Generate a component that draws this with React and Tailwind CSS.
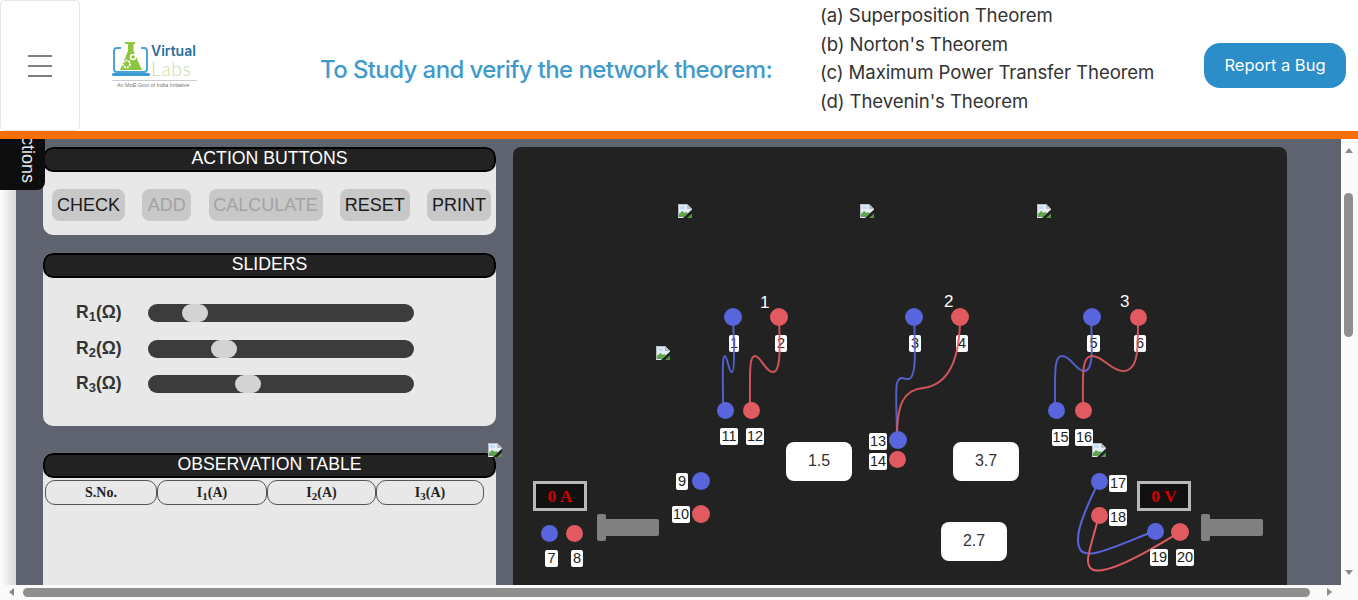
import React from "react";

const BLUE = "#5865dc";
const RED = "#e05a5f";

function BrokenImg({ x, y }) {
  return (
    <svg className="absolute" style={{ left: x, top: y }} width="14" height="14" viewBox="0 0 14 14">
      <path d="M0 0H9L14 5V14H0Z" fill="#e6edf6" />
      <path d="M9 0V5H14Z" fill="#b9bcc0" />
      <path d="M0.5 0.5H9M0.5 0.5V13.5" stroke="#b5b8bc" strokeWidth="1" fill="none" />
      <path d="M1 13V10L4 7L7 9L8 8L10 9L6 13Z" fill="#5aa847" />
      <path d="M2 2H7V5H2Z" fill="#c7dcf6" />
      <path d="M5 14L14 5.5V14Z" fill="#222222" />
      <path d="M9 14L14 9.5V14Z" fill="#4f9a3f" />
    </svg>
  );
}

function Dot({ x, y, c, s = 18 }) {
  return (
    <div
      className="absolute rounded-full"
      style={{ left: x - s / 2, top: y - s / 2, width: s, height: s, backgroundColor: c }}
    />
  );
}

function Tag({ x, y, t, w }) {
  return (
    <div
      className="absolute h-[17px] rounded-[2px] bg-white text-[#222] text-[14.5px] leading-[17px] text-center"
      style={{ left: x, top: y, width: w }}
    >
      {t}
    </div>
  );
}

function Readout({ x, y, t }) {
  return (
    <div
      className="absolute w-[54px] h-[30px] border-[3px] border-[#b8b8b8] bg-[#111] text-[#d00000] font-bold text-[17.5px] leading-[24px] text-center font-['Liberation_Serif',serif]"
      style={{ left: x, top: y }}
    >
      {t}
    </div>
  );
}

function Probe({ x, y }) {
  return (
    <div className="absolute flex items-center" style={{ left: x, top: y }}>
      <div className="w-[9px] h-[27px] bg-[#808080] rounded-[2px]" />
      <div className="w-[53px] h-[17px] bg-[#808080] rounded-r-[2px]" />
    </div>
  );
}

function ValueBox({ x, y, t }) {
  return (
    <div
      className="absolute w-[66px] h-[39px] rounded-[8px] bg-white text-[#333] text-[16px] leading-[37px] text-center"
      style={{ left: x, top: y }}
    >
      {t}
    </div>
  );
}

function Title({ children }) {
  return (
    <div className="h-[25px] rounded-[10px] border-2 border-black bg-[#222] text-white text-[17.7px] leading-[18px] text-center">
      {children}
    </div>
  );
}

function Btn({ children, off, w }) {
  return (
    <div
      className={`h-[32px] rounded-[8px] bg-[#c8c8c8] text-[18px] leading-[32px] text-center ${off ? "text-[#a3a3a3]" : "text-[#1a1a1a]"}`}
      style={{ width: w }}
    >
      {children}
    </div>
  );
}

function SliderRow({ n, pos }) {
  return (
    <div className="flex items-center h-[18px]">
      <div className="w-[105px] pl-[33px] -mt-[2px] text-[#333] font-bold text-[17.5px] leading-[18px] whitespace-nowrap">
        R<sub className="text-[13px] leading-none">{n}</sub>(Ω)
      </div>
      <div className="relative w-[266px] h-[18px] rounded-[9px] bg-[#3c3c3c]">
        <div
          className="absolute top-0 w-[26px] h-[18px] rounded-[9px] bg-[#d3d3d3]"
          style={{ left: pos }}
        />
      </div>
    </div>
  );
}

function Th({ w, children }) {
  return (
    <div
      className="h-[25px] rounded-[10px] border border-[#555] font-bold text-[#222] text-[14px] leading-[23px] text-center font-['Liberation_Serif',serif]"
      style={{ width: w }}
    >
      {children}
    </div>
  );
}

function Cur({ n }) {
  return (
    <>
      I<sub className="text-[11px] leading-none">{n}</sub>(A)
    </>
  );
}

function Logo() {
  return (
    <div className="relative w-[90px] h-[56px] ml-[31px] mt-[3px] shrink-0 font-['Inter',sans-serif]">
      <svg className="absolute left-0 top-0" width="42" height="40" viewBox="0 0 42 40">
        <path d="M10 9H6Q3 9 3 12V30Q3 33 6 33H33Q36 33 36 30V12Q36 9 33 9H30" fill="none" stroke="#4aa3d6" strokeWidth="2" />
        <rect x="1" y="34" width="38" height="3" rx="1.5" fill="#3c9ad2" />
        <path d="M14 3H24V5H22.5V12L31 31H9L17 12V5H14Z" fill="#8cc63f" />
        <circle cx="15.5" cy="25" r="3.5" fill="none" stroke="#fff" strokeWidth="2" strokeDasharray="2 1" />
        <circle cx="22" cy="18" r="2.5" fill="none" stroke="#fff" strokeWidth="1.5" />
      </svg>
      <div className="absolute left-[40px] top-[4px] text-[14px] leading-[16px] font-semibold text-[#2b6f9f]">Virtual</div>
      <div className="absolute left-[40px] top-[20px] text-[19px] leading-[20px] font-light text-[#c6e0a0] tracking-[0.8px] font-['Lato',sans-serif]">Labs</div>
      <div className="absolute left-[1px] top-[41px] w-[85px] h-px bg-[#ccc]" />
      <div className="absolute left-[6px] top-[43px] text-[5.4px] leading-[7px] text-[#777] whitespace-nowrap font-['Liberation_Sans',sans-serif]">An MoE Govt of India Initiative</div>
    </div>
  );
}

function Canvas() {
  return (
    <div className="relative w-[774px] h-[438px] shrink-0 rounded-t-[8px] bg-[#222] overflow-hidden font-['Liberation_Sans',sans-serif]">
      <BrokenImg x={165} y={57} />
      <BrokenImg x={347} y={57} />
      <BrokenImg x={524} y={57} />
      <BrokenImg x={143} y={199} />
      <BrokenImg x={579} y={296} />

      <Tag x={216} y={188} t="1" w={10} />
      <Tag x={262} y={188} t="2" w={12} />
      <Tag x={396} y={188} t="3" w={12} />
      <Tag x={443} y={188} t="4" w={12} />
      <Tag x={574} y={188} t="5" w={13} />
      <Tag x={621} y={188} t="6" w={12} />

      <svg className="absolute left-0 top-0" width="774" height="438" viewBox="0 0 774 438" fill="none" strokeWidth="2">
        <path d="M220 170C221 195 222 225 219 225C216 226 214 209 212 209C209 209 210 225 210 258" stroke={BLUE} opacity="0.9" />
        <path d="M266 170C267 200 268 225 260 225C252 225 248 209 242 209C236 209 237 225 237 260" stroke={RED} opacity="0.9" />
        <path d="M401 170C402 200 404 232 395 232C390 232 387 228 384 236C382 245 384 270 384 290" stroke={BLUE} opacity="0.9" />
        <path d="M447 170C447 215 435 238 410 241C390 243 384 258 384 290" stroke={RED} opacity="0.9" />
        <path d="M578 170C579 200 581 224 571 224C563 224 558 209 549 209C541 209 542 225 542 260" stroke={BLUE} opacity="0.9" />
        <path d="M625 170C625 200 626 224 610 224C598 224 590 209 579 209C568 209 570 230 570 262" stroke={RED} opacity="0.9" />
        <path d="M586 334C576 355 565 378 565 392C565 405 570 408 582 406C600 402 625 390 642 384" stroke={BLUE} />
        <path d="M586 368C582 385 575 405 575 413C575 422 580 425 590 423C610 420 645 398 667 385" stroke={RED} />
      </svg>

      <Dot x={220} y={170} c={BLUE} />
      <Dot x={266} y={170} c={RED} s={17.5} />
      <Dot x={212} y={263} c={BLUE} s={17} />
      <Dot x={238.5} y={263} c={RED} s={17} />
      <Dot x={400.5} y={170} c={BLUE} />
      <Dot x={447} y={170} c={RED} s={17.5} />
      <Dot x={384.5} y={292.5} c={BLUE} />
      <Dot x={384.5} y={312} c={RED} s={17} />
      <Dot x={578.5} y={170} c={BLUE} />
      <Dot x={625} y={170} c={RED} s={17} />
      <Dot x={543} y={263} c={BLUE} s={17} />
      <Dot x={570} y={263} c={RED} s={17} />
      <Dot x={586} y={334} c={BLUE} s={17} />
      <Dot x={586} y={368} c={RED} s={17} />
      <Dot x={642} y={384} c={BLUE} s={17} />
      <Dot x={667} y={385} c={RED} s={17.5} />
      <Dot x={188} y={334} c={BLUE} />
      <Dot x={188} y={367} c={RED} />
      <Dot x={36.5} y={386} c={BLUE} s={17} />
      <Dot x={61.5} y={386} c={RED} s={17} />

      <Tag x={207} y={281} t="11" w={18} />
      <Tag x={233} y={281} t="12" w={18} />
      <Tag x={356} y={286} t="13" w={18} />
      <Tag x={356} y={306} t="14" w={18} />
      <Tag x={539} y={282} t="15" w={17} />
      <Tag x={562} y={282} t="16" w={18} />
      <Tag x={596} y={328} t="17" w={18} />
      <Tag x={596} y={362} t="18" w={18} />
      <Tag x={637} y={402} t="19" w={18} />
      <Tag x={663} y={402} t="20" w={18} />
      <Tag x={163} y={326} t="9" w={12} />
      <Tag x={159} y={359} t="10" w={18} />
      <Tag x={32} y={403} t="7" w={13} />
      <Tag x={58} y={403} t="8" w={12} />

      <div className="absolute left-[247px] top-[147px] text-white text-[17px] leading-[18px]">1</div>
      <div className="absolute left-[431px] top-[146px] text-white text-[17px] leading-[18px]">2</div>
      <div className="absolute left-[607px] top-[146px] text-white text-[17px] leading-[18px]">3</div>

      <ValueBox x={273} y={295} t="1.5" />
      <ValueBox x={440} y={295} t="3.7" />
      <ValueBox x={428} y={375} t="2.7" />

      <Readout x={20} y={334} t="0 A" />
      <Readout x={624} y={334} t="0 V" />
      <Probe x={84} y={367} />
      <Probe x={688} y={367} />
    </div>
  );
}

export default function App() {
  return (
    <div className="h-[600px] w-[1358px] overflow-hidden flex flex-col bg-white font-['Liberation_Sans',sans-serif]">
      <header className="h-[139px] shrink-0 flex items-stretch border-b-[8px] border-[#f66f05] bg-white font-['Inter',sans-serif]">
        <div className="w-[80px] shrink-0 rounded-[5px] border border-[#e6e6e6] flex flex-col items-center justify-center gap-[8px]">
          <div className="w-[24px] h-[2px] bg-[#808080]" />
          <div className="w-[24px] h-[2px] bg-[#808080]" />
          <div className="w-[24px] h-[2px] bg-[#808080]" />
        </div>
        <div className="flex items-center">
          <Logo />
        </div>
        <div className="flex items-center pl-[119px] w-[619px] shrink-0">
          <h1 className="text-[24px] font-medium text-[#3f9bcb] whitespace-nowrap tracking-[-0.6px] mt-[8px]">
            To Study and verify the network theorem:
          </h1>
        </div>
        <ul className="w-[384px] shrink-0 pt-[1px] text-[18.6px] leading-[28.5px] tracking-[-0.1px] text-[#333] whitespace-nowrap">
          <li>(a) Superposition Theorem</li>
          <li>(b) Norton's Theorem</li>
          <li>(c) Maximum Power Transfer Theorem</li>
          <li>(d) Thevenin's Theorem</li>
        </ul>
        <div className="flex items-center">
          <div className="w-[142px] h-[45px] rounded-[16px] bg-[#2b8ec9] text-white text-[16.5px] leading-[44px] text-center">
            Report a Bug
          </div>
        </div>
      </header>

      <div className="flex-1 min-h-0 flex">
        <main className="relative w-[1341px] shrink-0 h-[446px] flex bg-[#5f636f]">
          <div className="w-[16px] shrink-0 bg-gradient-to-r from-[#ffffff] to-[#d8d8d8]" />
          <div className="absolute left-0 top-0 w-[45px] h-[51px] rounded-br-[8px] bg-[#0d0d0d] overflow-hidden">
            <div className="absolute right-[8px] bottom-[7px] text-[#e8e8e8] text-[18px] leading-[18px] whitespace-nowrap [writing-mode:vertical-rl]">
              ctions
            </div>
          </div>
          <div className="ml-[27px] w-[453px] shrink-0 pt-[8px] flex flex-col">
            <section className="h-[88px] rounded-[10px] bg-[#e8e8e8] shrink-0">
              <Title>ACTION BUTTONS</Title>
              <div className="flex justify-between pt-[17px] pl-[9px] pr-[5px]">
                <Btn w={73}>CHECK</Btn>
                <Btn w={49} off>ADD</Btn>
                <Btn w={114} off>CALCULATE</Btn>
                <Btn w={70}>RESET</Btn>
                <Btn w={64}>PRINT</Btn>
              </div>
            </section>
            <section className="mt-[18px] h-[173px] rounded-[10px] bg-[#e8e8e8] shrink-0">
              <Title>SLIDERS</Title>
              <div className="pt-[26px] flex flex-col gap-[17.5px]">
                <SliderRow n={1} pos={34} />
                <SliderRow n={2} pos={63} />
                <SliderRow n={3} pos={87} />
              </div>
            </section>
            <section className="mt-[27px] flex-1 rounded-t-[10px] bg-[#e8e8e8]">
              <Title>OBSERVATION TABLE</Title>
              <div className="flex pl-[2px] pt-[2px]">
                <Th w={112}>S.No.</Th>
                <Th w={110}><Cur n={1} /></Th>
                <Th w={109}><Cur n={2} /></Th>
                <Th w={108}><Cur n={3} /></Th>
              </div>
            </section>
          </div>
          <BrokenImg x={488} y={304} />
          <div className="ml-[17px] pt-[8px]">
            <Canvas />
          </div>
        </main>
        <aside className="relative w-[17px] shrink-0 bg-[#fafafa]">
          <div className="absolute left-[4px] top-[9px] w-0 h-0 border-x-[4px] border-x-transparent border-b-[5px] border-b-[#8a8a8a]" />
          <div className="absolute left-[3px] top-[54px] w-[9px] h-[144px] rounded-[5px] bg-[#8f8f8f]" />
          <div className="absolute left-[4px] top-[431px] w-0 h-0 border-x-[4px] border-x-transparent border-t-[5px] border-t-[#8a8a8a]" />
        </aside>
      </div>

      <div className="relative h-[15px] shrink-0 bg-[#fafafa]">
        <div className="absolute left-[9px] top-[3px] w-0 h-0 border-y-[4px] border-y-transparent border-r-[5px] border-r-[#8a8a8a]" />
        <div className="absolute left-[23px] top-[3px] w-[1287px] h-[9px] rounded-[5px] bg-[#8f8f8f]" />
        <div className="absolute left-[1327px] top-[3px] w-0 h-0 border-y-[4px] border-y-transparent border-l-[5px] border-l-[#8a8a8a]" />
      </div>
    </div>
  );
}
